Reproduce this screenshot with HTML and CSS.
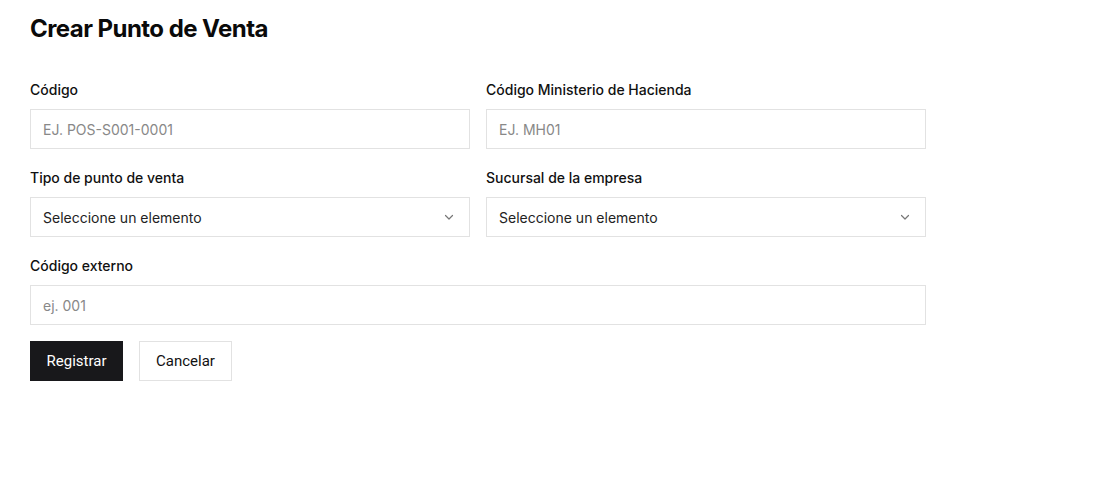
FILE: index.html
```html
<!DOCTYPE html>
<html lang="es">
<head>
<meta charset="utf-8">
<link rel="stylesheet" href="styles.css">
</head>
<body>
<main class="page">
  <h1 class="title">Crear Punto de Venta</h1>
  <form class="form">
    <div class="grid">
      <div class="field">
        <label class="label">Código</label>
        <input class="input" placeholder="EJ. POS-S001-0001">
      </div>
      <div class="field">
        <label class="label">Código Ministerio de Hacienda</label>
        <input class="input" placeholder="EJ. MH01">
      </div>
      <div class="field">
        <label class="label">Tipo de punto de venta</label>
        <div class="select">
          <span>Seleccione un elemento</span>
          <svg class="chev" width="12" height="12" viewBox="0 0 12 12"><path d="M2.5 4.5 L6 8 L9.5 4.5" fill="none" stroke="#777" stroke-width="1.2" stroke-linecap="round" stroke-linejoin="round"/></svg>
        </div>
      </div>
      <div class="field">
        <label class="label">Sucursal de la empresa</label>
        <div class="select">
          <span>Seleccione un elemento</span>
          <svg class="chev" width="12" height="12" viewBox="0 0 12 12"><path d="M2.5 4.5 L6 8 L9.5 4.5" fill="none" stroke="#777" stroke-width="1.2" stroke-linecap="round" stroke-linejoin="round"/></svg>
        </div>
      </div>
      <div class="field full">
        <label class="label">Código externo</label>
        <input class="input" placeholder="ej. 001">
      </div>
    </div>
    <div class="actions">
      <button type="button" class="btn primary">Registrar</button>
      <button type="button" class="btn outline">Cancelar</button>
    </div>
  </form>
</main>
</body>
</html>
```
FILE: styles.css
```css
* { box-sizing: border-box; }
html, body { margin: 0; background: #fff; }
body { font-family: Inter, "Noto Sans", sans-serif; color: #111; }
.page { padding: 13px 30px 0 30px; width: 956px; }
.title { margin: 0 0 35px 0; font-size: 24px; line-height: 32px; font-weight: 700; color: #0a0a0a; letter-spacing: -0.55px; }
.grid { display: grid; grid-template-columns: 440px 440px; column-gap: 16px; row-gap: 19px; }
.field { display: flex; flex-direction: column; }
.full { grid-column: 1 / span 2; }
.label { font-size: 14px; line-height: 20px; font-weight: 500; color: #111; margin-bottom: 9px; }
.input, .select {
  height: 40px; border: 1px solid #e2e2e2; border-radius: 0; padding: 0 12px;
  font-family: Inter, "Noto Sans", sans-serif; font-size: 14px; color: #222; background: #fff; outline: none;
}
.input::placeholder { color: #888; }
.select { display: flex; align-items: center; justify-content: space-between; padding-right: 14px; }
.chev { display: block; }
.actions { display: flex; gap: 16px; margin-top: 16px; }
.btn { height: 40px; width: 93px; padding: 0; font-family: Roboto, "Noto Sans", sans-serif; font-size: 15px; font-weight: 400; border-radius: 0; cursor: pointer; }
.primary { background: #18181b; color: #fff; border: 1px solid #18181b; }
.outline { background: #fff; color: #111; border: 1px solid #e2e2e2; }
```
